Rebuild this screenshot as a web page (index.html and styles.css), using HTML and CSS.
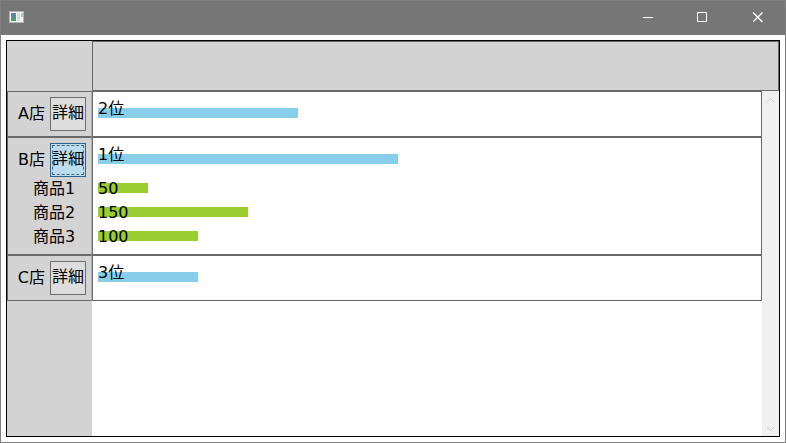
FILE: index.html
```html
<!DOCTYPE html>
<html lang="ja">
<head>
    <meta charset="UTF-8">
    <meta name="viewport" content="width=device-width, initial-scale=1.0">
    <title>店舗別ランキング</title>
    <link rel="stylesheet" href="styles.css">
</head>
<body>
    <div class="window">
        <header class="titlebar">
            <svg class="app-icon" width="16" height="14" viewBox="0 0 16 14" aria-hidden="true">
                <defs>
                    <linearGradient id="screen" x1="0" y1="0" x2="0" y2="1">
                        <stop offset="0" stop-color="#5a86b0"/>
                        <stop offset="1" stop-color="#4a9e6c"/>
                    </linearGradient>
                </defs>
                <rect x="0.5" y="0.5" width="14" height="11" fill="#f4f4f4" stroke="#b4b4b4"/>
                <rect x="2" y="2" width="5" height="8" fill="url(#screen)"/>
                <rect x="8" y="2" width="3" height="8" fill="#dcdcdc"/>
                <rect x="12" y="2" width="2" height="4" fill="#a4cbc4"/>
            </svg>
            <div class="window-buttons">
                <button type="button" aria-label="最小化">
                    <svg width="11" height="12" viewBox="0 0 11 12"><path d="M1 5.5H11"/></svg>
                </button>
                <button type="button" aria-label="最大化">
                    <svg width="11" height="12" viewBox="0 0 11 12"><path d="M0.5 0.5H9.5V9.5H0.5Z"/></svg>
                </button>
                <button type="button" aria-label="閉じる">
                    <svg width="11" height="12" viewBox="0 0 11 12"><path class="cross" d="M1 0.5L10.5 10M10.5 0.5L1 10"/></svg>
                </button>
            </div>
        </header>

        <main class="panel">
            <div class="head">
                <div class="head-label"></div>
                <div class="head-chart"></div>
            </div>
            <div class="content">
                <div class="rows">
                    <section class="row">
                        <div class="side">
                            <div class="store"><span>A店</span><button type="button" class="detail">詳細</button></div>
                        </div>
                        <div class="chart">
                            <div class="rank"><div class="bar" style="width: 200px"></div><span>2位</span></div>
                        </div>
                    </section>
                    <section class="row">
                        <div class="side">
                            <div class="store"><span>B店</span><button type="button" class="detail active">詳細</button></div>
                            <div class="item">商品1</div>
                            <div class="item">商品2</div>
                            <div class="item">商品3</div>
                        </div>
                        <div class="chart">
                            <div class="rank"><div class="bar" style="width: 300px"></div><span>1位</span></div>
                            <div class="sales"><div class="bar" style="width: 50px"></div><span>50</span></div>
                            <div class="sales"><div class="bar" style="width: 150px"></div><span>150</span></div>
                            <div class="sales"><div class="bar" style="width: 100px"></div><span>100</span></div>
                        </div>
                    </section>
                    <section class="row">
                        <div class="side">
                            <div class="store"><span>C店</span><button type="button" class="detail">詳細</button></div>
                        </div>
                        <div class="chart">
                            <div class="rank"><div class="bar" style="width: 100px"></div><span>3位</span></div>
                        </div>
                    </section>
                    <div class="rest"></div>
                </div>
                <div class="scrollbar">
                    <svg width="9" height="7" viewBox="0 0 9 7"><path d="M1 5L4.5 1.5L8 5"/></svg>
                    <svg width="9" height="7" viewBox="0 0 9 7"><path d="M1 2L4.5 5.5L8 2"/></svg>
                </div>
            </div>
        </main>
    </div>
</body>
</html>
```
FILE: styles.css
```css
* {
    box-sizing: border-box;
}
body {
    margin: 0;
    font-family: "DejaVu Sans", "Noto Sans CJK JP", sans-serif;
    font-size: 16px;
    line-height: 24px;
    color: #000;
}
button {
    font: inherit;
    color: inherit;
    padding: 0;
}
.window {
    display: flex;
    flex-direction: column;
    height: 100vh;
    border: 1px solid #808080;
    background-color: #fff;
}

/* title bar */
.titlebar {
    display: flex;
    align-items: center;
    justify-content: space-between;
    height: 34px;
    padding-left: 8px;
    background-color: #767676;
}
.window-buttons {
    display: flex;
    height: 100%;
}
.window-buttons button {
    display: flex;
    align-items: center;
    justify-content: center;
    width: 55px;
    border: none;
    background: none;
}
.window-buttons path {
    fill: none;
    stroke: #fff;
}
.window-buttons .cross {
    stroke-width: 1.3;
}

/* main panel */
.panel {
    display: flex;
    flex-direction: column;
    flex: 1;
    margin: 5px;
    border: 1px solid #000;
}
.head {
    display: flex;
    height: 50px;
    background-color: #d3d3d3;
}
.head-label {
    width: 85px;
}
.head-chart {
    flex: 1;
    border: 1px solid #696969;
}
.content {
    display: flex;
    flex: 1;
}
.rows {
    display: flex;
    flex-direction: column;
    flex: 1;
}
.row {
    display: flex;
}
.side {
    width: 85px;
    padding: 5px;
    border: 1px solid #696969;
    border-right-color: #b0b0b0;
    background-color: #d3d3d3;
}
.chart {
    flex: 1;
    padding: 5px;
    border: 1px solid #696969;
}
.store {
    display: flex;
    align-items: center;
    justify-content: flex-end;
    gap: 5px;
    height: 34px;
}
.item {
    height: 24px;
    padding-left: 20px;
    white-space: nowrap;
}
.detail {
    width: 36px;
    height: 34px;
    padding-bottom: 2px;
    border: 1px solid #707070;
    background-color: #ddd;
}
.detail.active {
    border-color: #2c628b;
    background-color: #bcddee;
    outline: 1px dashed #4a6478;
    outline-offset: -3px;
}
.rest {
    flex: 1;
    width: 85px;
    background-color: #d3d3d3;
}

/* bars with their value written over them */
.rank,
.sales {
    position: relative;
}
.rank {
    height: 34px;
    padding-top: 11px;
}
.sales {
    height: 24px;
    padding-top: 6px;
}
.rank span,
.sales span {
    position: absolute;
    top: 0;
    left: 0;
}
.bar {
    height: 10px;
    background-color: #87ceeb;
}
.sales .bar {
    background-color: #9acd32;
}

/* scroll bar */
.scrollbar {
    display: flex;
    flex-direction: column;
    align-items: center;
    justify-content: space-between;
    width: 17px;
    padding: 6px 0 4px;
    background-color: #f0f0f0;
}
.scrollbar path {
    fill: none;
    stroke: #cdcdcd;
}
```
